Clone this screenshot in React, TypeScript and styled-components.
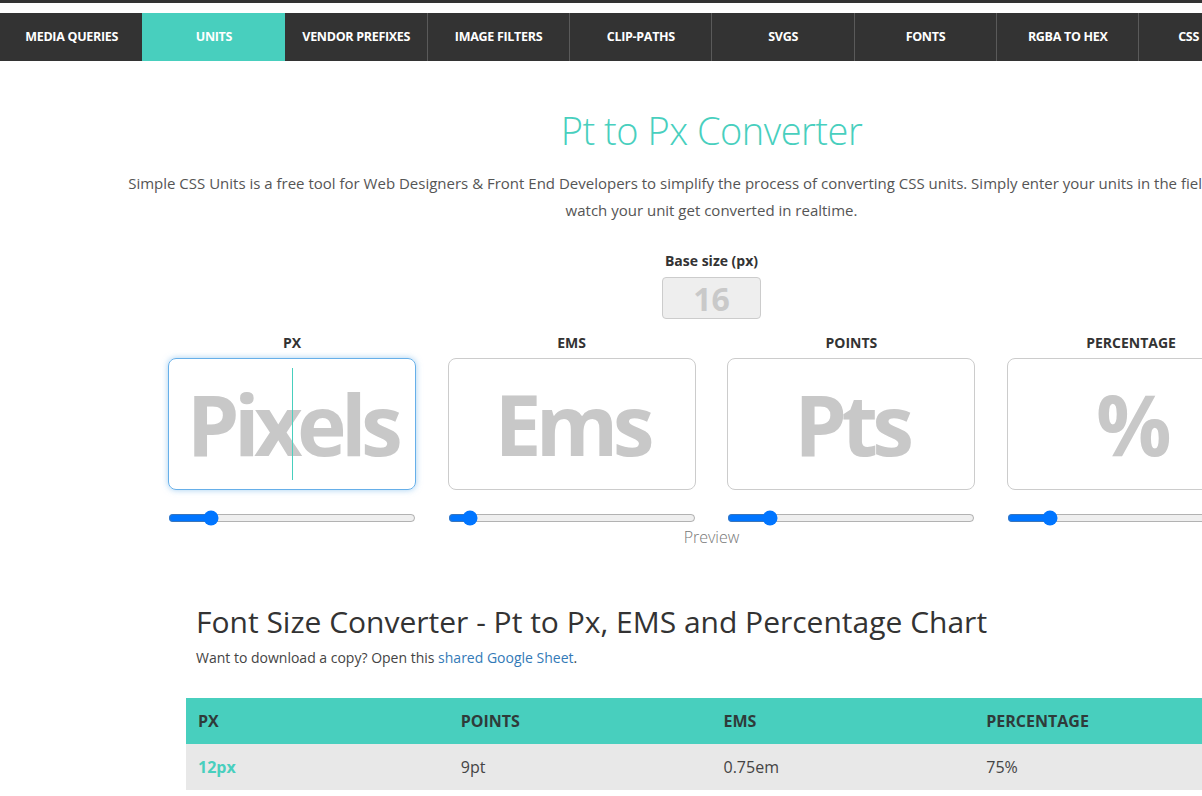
import React from "react";
import styled, { createGlobalStyle } from "styled-components";

const Global = createGlobalStyle`
  html, body { margin: 0; padding: 0; overflow: hidden; background: #fff; }
  body { font-family: "Open Sans", "Liberation Sans", sans-serif; color: #333; }
  * { box-sizing: border-box; }
`;

const Page = styled.div`
  width: 1423px;
`;

const TopStrip = styled.div`
  height: 3px;
  background: #333;
  margin-bottom: 10px;
`;

const Nav = styled.nav`
  display: flex;
  height: 48px;
  background: #333;
`;

const NavItem = styled.a<{ $active?: boolean; $sep?: boolean }>`
  flex: 0 0 142.3px;
  display: flex;
  align-items: center;
  justify-content: center;
  padding-bottom: 2px;
  color: #fff;
  font-weight: 700;
  font-size: 12.5px;
  letter-spacing: -0.3px;
  text-transform: uppercase;
  text-decoration: none;
  white-space: nowrap;
  background: ${(p) => (p.$active ? "#48cfbe" : "#333")};
  border-left: 1px solid ${(p) => (p.$sep ? "#5a5a5a" : "transparent")};
`;

const Main = styled.main`
  display: flex;
  flex-direction: column;
  align-items: center;
  padding-top: 45px;
`;

const Title = styled.h1`
  margin: 0;
  font-size: 38px;
  line-height: 48px;
  font-weight: 300;
  letter-spacing: -0.5px;
  color: #48cfbe;
`;

const Intro = styled.p`
  margin: 16px 0 0;
  width: 1180px;
  text-align: center;
  font-size: 15px;
  line-height: 27px;
  color: #555;
`;

const SmallLabel = styled.label`
  display: block;
  font-size: 14px;
  line-height: 18px;
  font-weight: 700;
  color: #333;
  text-align: center;
`;

const BaseWrap = styled.div`
  margin-top: 28px;
  display: flex;
  flex-direction: column;
  align-items: center;
  gap: 7px;
`;

const BaseInput = styled.div`
  width: 99px;
  height: 42px;
  border: 1px solid #ccc;
  border-radius: 4px;
  background: #eee;
  display: flex;
  align-items: center;
  justify-content: center;
  font-size: 32px;
  font-weight: 700;
  color: #c9c9c9;
`;

const Grid = styled.div`
  margin-top: 15px;
  display: grid;
  grid-template-columns: repeat(4, 279.7px);
`;

const Column = styled.div`
  display: flex;
  flex-direction: column;
  align-items: center;
`;

const UnitBox = styled.div<{ $focused?: boolean }>`
  position: relative;
  margin-top: 6px;
  width: 248px;
  height: 132px;
  border-radius: 8px;
  border: 1px solid ${(p) => (p.$focused ? "#66afe9" : "#ccc")};
  box-shadow: ${(p) => (p.$focused ? "0 0 6px rgba(102,175,233,0.6)" : "none")};
  display: flex;
  align-items: center;
  justify-content: center;
  overflow: hidden;
`;

const Placeholder = styled.span`
  font-size: 84px;
  font-weight: 700;
  letter-spacing: -5.6px;
  color: #c8c8c8;
  line-height: 1;
`;

const Caret = styled.span`
  position: absolute;
  left: 123px;
  top: 9px;
  bottom: 9px;
  width: 1px;
  background: #48cfbe;
`;

const Range = styled.input`
  margin: 20px 0 0;
  width: 248px;
  height: 16px;
`;

const Preview = styled.div`
  margin-top: 1px;
  font-size: 16px;
  line-height: 20px;
  font-weight: 300;
  color: #777;
`;

const Section = styled.section`
  width: 1051px;
  margin-top: 57px;
`;

const ChartTitle = styled.h2`
  margin: 0;
  padding-left: 10px;
  font-size: 30px;
  line-height: 36px;
  font-weight: 400;
  color: #333;
`;

const Note = styled.p`
  margin: 8px 0 0;
  padding-left: 10px;
  font-size: 14px;
  line-height: 20px;
  color: #444;
  a { color: #337ab7; text-decoration: none; }
`;

const Table = styled.table`
  margin-top: 30px;
  width: 100%;
  border-collapse: collapse;
  table-layout: fixed;
`;

const Th = styled.th`
  background: #48cfbe;
  height: 46px;
  padding: 0 12px;
  text-align: left;
  font-size: 16px;
  font-weight: 700;
  color: #2f3b3a;
`;

const Td = styled.td<{ $accent?: boolean }>`
  background: #e8e8e8;
  height: 46px;
  padding: 0 12px;
  font-size: 16px;
  font-weight: ${(p) => (p.$accent ? 700 : 400)};
  color: ${(p) => (p.$accent ? "#48cfbe" : "#444")};
`;

const navItems = [
  "Media Queries",
  "Units",
  "Vendor Prefixes",
  "Image Filters",
  "Clip-Paths",
  "SVGs",
  "Fonts",
  "RGBA to Hex",
  "CSS Hacks",
  "Resources",
];

const units = [
  { label: "PX", ph: "Pixels", value: 15, focused: true },
  { label: "EMS", ph: "Ems", value: 6 },
  { label: "POINTS", ph: "Pts", value: 15 },
  { label: "PERCENTAGE", ph: "%", value: 15 },
];

export default function App() {
  return (
    <Page>
      <Global />
      <TopStrip />
      <Nav>
        {navItems.map((n, i) => (
          <NavItem key={n} href="#" $active={n === "Units"} $sep={i > 2}>
            {n}
          </NavItem>
        ))}
      </Nav>
      <Main>
        <Title>Pt to Px Converter</Title>
        <Intro>
          Simple CSS Units is a free tool for Web Designers &amp; Front End Developers to simplify the process of
          converting CSS units. Simply enter your units in the fields below and watch your unit get converted in
          realtime.
        </Intro>
        <BaseWrap>
          <SmallLabel>Base size (px)</SmallLabel>
          <BaseInput>16</BaseInput>
        </BaseWrap>
        <Grid>
          {units.map((u) => (
            <Column key={u.label}>
              <SmallLabel>{u.label}</SmallLabel>
              <UnitBox $focused={u.focused}>
                <Placeholder>{u.ph}</Placeholder>
                {u.focused && <Caret />}
              </UnitBox>
              <Range type="range" min={0} max={100} defaultValue={u.value} />
            </Column>
          ))}
        </Grid>
        <Preview>Preview</Preview>
        <Section>
          <ChartTitle>Font Size Converter - Pt to Px, EMS and Percentage Chart</ChartTitle>
          <Note>
            Want to download a copy? Open this <a href="#">shared Google Sheet</a>.
          </Note>
          <Table>
            <thead>
              <tr>
                <Th>PX</Th>
                <Th>POINTS</Th>
                <Th>EMS</Th>
                <Th>PERCENTAGE</Th>
              </tr>
            </thead>
            <tbody>
              <tr>
                <Td $accent>12px</Td>
                <Td>9pt</Td>
                <Td>0.75em</Td>
                <Td>75%</Td>
              </tr>
            </tbody>
          </Table>
        </Section>
      </Main>
    </Page>
  );
}
